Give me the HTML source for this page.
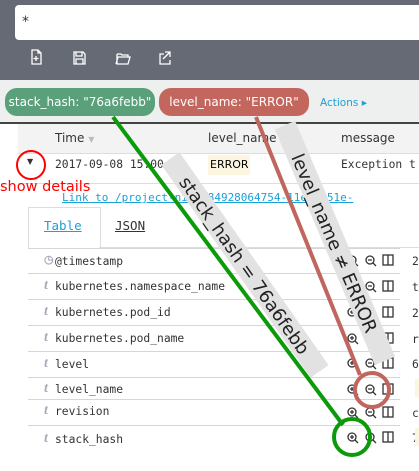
<!DOCTYPE html>
<html><head><style>
body{margin:0;width:419px;height:471px;overflow:hidden;background:#fff;font-family:"DejaVu Sans","Liberation Sans",sans-serif;position:relative}
.a{position:absolute}
.mono{font-family:"DejaVu Sans Mono","Liberation Mono",monospace;font-size:11.3px;color:#333}
.row{position:absolute;left:28px;width:391px;border-top:1px solid #d6d6d6}
.t{position:absolute;left:16px;color:#aab;font-style:italic;font-family:"Liberation Serif",serif;font-size:14px;font-weight:bold}
</style></head><body>
<div class="a" style="left:0;top:0;width:419px;height:80px;background:#666a75"></div>
<div class="a" style="left:15px;top:5px;width:410px;height:35px;background:#fff;border-radius:4px"></div>
<div class="a" style="left:22px;top:14px;font-size:14px;color:#333">*</div>
<svg class="a" style="left:25px;top:47px" width="160" height="20" fill="none" stroke="#fff" stroke-width="1.3">
<path d="M7 3h6l3 3v11H7z M13 3v3h3 M11 9v5 M8.5 11.5h5"/>
<path d="M49 5h9l2 2v10H49z M51 5v4h6V5 M51 17v-5h7v5"/>
<path d="M92 7h4l1 1h6v2 M92 7v10h11l2-7h-12l-2 7"/>
<path d="M139 7h-4v10h10v-4 M140 5h5v5 M145 5l-7 7"/>
</svg>
<div class="a" style="left:0;top:80px;width:419px;height:43px;background:#eef0f0"></div>
<div class="a" style="left:5px;top:88px;width:150px;height:28px;background:#5aa07a;border-radius:12px;color:#fff;font-size:12px;line-height:28px;text-align:center">stack_hash: "76a6febb"</div>
<div class="a" style="left:159px;top:88px;width:150px;height:28px;background:#c3665e;border-radius:12px;color:#fff;font-size:12px;line-height:28px;text-align:center">level_name: "ERROR"</div>
<div class="a" style="left:320px;top:97px;font-size:10.5px;color:#1ba0d8">Actions ▸</div>
<div class="a" style="left:0;top:122px;width:419px;height:2px;background:#444"></div>
<div class="a" style="left:18px;top:124px;width:401px;height:29px;background:#f3f3f3;border-bottom:1px solid #ddd"></div>
<div class="a" style="left:55px;top:131px;font-size:12px;color:#333">Time <span style="color:#bbb;font-size:8px">▼</span></div>
<div class="a" style="left:208px;top:131px;font-size:12px;color:#333">level_name</div>
<div class="a" style="left:341px;top:131px;font-size:12px;color:#333">message</div>
<div class="a" style="left:27px;top:157px;font-size:8px;color:#333">▼</div>
<div class="a mono" style="left:55px;top:158px">2017-09-08 15:00:00</div>
<div class="a" style="left:208px;top:155px;width:40px;height:20px;background:#fcf6e0;font-size:11px;line-height:20px;padding-left:2px;color:#000">ERROR</div>
<div class="a mono" style="left:341px;top:158px">Exception t</div>
<div class="a" style="left:18px;top:183px;width:401px;height:1px;background:#ddd"></div>
<div class="a mono" style="left:62px;top:191px;color:#1ba0d8;text-decoration:underline;font-size:11px;white-space:nowrap">Link to /project-nice.84928064754-11e7-b51e-</div>
<div class="a" style="left:0;top:179px;font-size:14.5px;color:#f00;font-family:'DejaVu Sans',sans-serif">show details</div>
<div class="a" style="left:28px;top:207px;width:71px;height:40px;border:1px solid #ddd;border-bottom:none;background:#fff"></div>
<div class="a mono" style="left:44px;top:218px;color:#1ba0d8;text-decoration:underline;font-size:12.5px">Table</div>
<div class="a mono" style="left:115px;top:218px;text-decoration:underline;font-size:12.5px">JSON</div>
<div class="a" style="left:99px;top:247px;width:320px;height:1px;background:#ddd"></div>
<div class="row" style="top:248px;height:25px"><span class="t" style="top:4px;font-style:normal;font-size:11px">◷</span><span class="a mono" style="left:27px;top:6px">@timestamp</span></div>
<div class="row" style="top:273px;height:26px"><span class="t" style="top:4px">t</span><span class="a mono" style="left:27px;top:6px">kubernetes.namespace_name</span></div>
<div class="row" style="top:299px;height:26px"><span class="t" style="top:4px">t</span><span class="a mono" style="left:27px;top:6px">kubernetes.pod_id</span></div>
<div class="row" style="top:325px;height:26px"><span class="t" style="top:4px">t</span><span class="a mono" style="left:27px;top:6px">kubernetes.pod_name</span></div>
<div class="row" style="top:351px;height:26px"><span class="t" style="top:4px">t</span><span class="a mono" style="left:27px;top:6px">level</span></div>
<div class="row" style="top:377px;height:22px"><span class="t" style="top:3px">t</span><span class="a mono" style="left:27px;top:5px">level_name</span></div>
<div class="row" style="top:399px;height:26px"><span class="t" style="top:3px">t</span><span class="a mono" style="left:27px;top:5px">revision</span></div>
<div class="row" style="top:425px;height:26px"><span class="t" style="top:5px">t</span><span class="a mono" style="left:27px;top:7px">stack_hash</span></div>
<svg class="a" style="left:0;top:0" width="419" height="471">
<defs><g id="ic" fill="none" stroke="#333" stroke-width="1.3"><circle cx="352" cy="0" r="4"/><path d="M355 3l3 3M350 0h4M352 -2v4"/><circle cx="370" cy="0" r="4"/><path d="M373 3l3 3M368 0h4"/><rect x="383" y="-5" width="10" height="10"/><path d="M388 -5v10"/></g></defs>
<use href="#ic" y="260"/><use href="#ic" y="286"/><use href="#ic" y="312"/><use href="#ic" y="338"/><use href="#ic" y="363"/><use href="#ic" y="389"/><use href="#ic" y="412"/><use href="#ic" y="437"/>
<rect x="400" y="248" width="19" height="203" fill="#fff"/>
<g font-family="DejaVu Sans Mono,monospace" font-size="11.3" fill="#333"><text x="412" y="265">2</text><text x="412" y="291">t</text><text x="412" y="317">2</text><text x="412" y="343">r</text><text x="412" y="368">6</text><text x="412" y="417">c</text><text x="412" y="442">7</text></g>
<rect x="415" y="379" width="4" height="18" fill="#fcf6e0"/><rect x="415" y="428" width="4" height="18" fill="#fcf6e0"/>
<circle cx="31" cy="165" r="14" fill="none" stroke="#f00" stroke-width="2"/>
<g transform="translate(245,265) rotate(55)"><rect x="-130" y="-11" width="260" height="22" fill="#e2e2e2"/><text x="0" y="7" text-anchor="middle" font-size="18" fill="#222" font-family="DejaVu Sans,sans-serif">stack_hash = 76a6febb</text></g>
<g transform="translate(335,243) rotate(67)"><rect x="-128" y="-11" width="256" height="22" fill="#e2e2e2"/><text x="0" y="7" text-anchor="middle" font-size="18" fill="#222" font-family="DejaVu Sans,sans-serif">level_name ≠ ERROR</text></g>
<path d="M113 117L343 425" stroke="#0a9a0a" stroke-width="4"/>
<circle cx="352" cy="437" r="18" fill="none" stroke="#0a9a0a" stroke-width="4"/>
<path d="M256 117L360 375" stroke="#c0665e" stroke-width="4"/>
<circle cx="372" cy="390" r="17" fill="none" stroke="#c0665e" stroke-width="4"/>
</svg>
</body></html>
